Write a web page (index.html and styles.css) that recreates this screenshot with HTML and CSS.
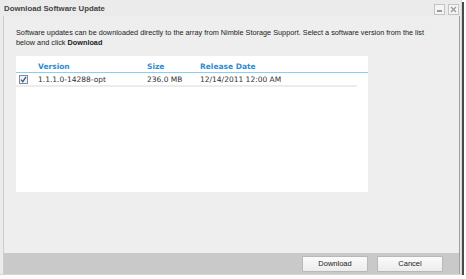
FILE: index.html
```html
<!DOCTYPE html>
<html>
<head>
<meta charset="utf-8">
<link rel="stylesheet" href="styles.css">
</head>
<body>
<div class="window">
  <div class="titlebar">
    <span class="title">Download Software Update</span>
    <div class="tools">
      <span class="tool"><svg width="7" height="7" viewBox="0 0 7 7"><rect x="1" y="4" width="5" height="2" fill="#9a9a9a"/></svg></span>
      <span class="tool"><svg width="7" height="7" viewBox="0 0 7 7"><path d="M1 1L6 6M6 1L1 6" stroke="#9a9a9a" stroke-width="1.3"/></svg></span>
    </div>
  </div>
  <div class="panel">
    <div class="content">
      <p class="desc">Software updates can be downloaded directly to the array from Nimble Storage Support. Select a software version from the list<br>below and click <b>Download</b></p>
      <div class="list">
        <div class="head">
          <span class="c-check"></span>
          <span class="c-ver">Version</span>
          <span class="c-size">Size</span>
          <span class="c-date">Release Date</span>
        </div>
        <div class="row">
          <span class="c-check"><span class="box"><svg width="7" height="7" viewBox="0 0 7 7"><path d="M1 3.6L2.8 5.6L6 0.8" fill="none" stroke="#2a55b0" stroke-width="1.3"/></svg></span></span>
          <span class="c-ver">1.1.1.0-14288-opt</span>
          <span class="c-size">236.0 MB</span>
          <span class="c-date">12/14/2011 12:00 AM</span>
        </div>
      </div>
    </div>
    <div class="footer">
      <button class="btn">Download</button>
      <button class="btn">Cancel</button>
    </div>
  </div>
</div>
</body>
</html>
```

FILE: styles.css
```css
html, body {
  margin: 0;
  padding: 0;
  background: #ffffff;
}
.window {
  width: 461px;
  height: 274px;
  background: #ebebeb;
  box-shadow: 2px 2px 0 #4a4a4a;
  border-right: 1px solid #d6d6d6;
  border-bottom: 1px solid #d6d6d6;
  display: flex;
  flex-direction: column;
  font-family: "Liberation Sans", Arial, sans-serif;
}
.titlebar {
  height: 16px;
  display: flex;
  align-items: center;
  justify-content: space-between;
  padding: 0 2px 0 4px;
}
.title {
  font-size: 7.8px;
  font-weight: bold;
  color: #444;
}
.tools {
  display: flex;
  gap: 3px;
  margin-top: 2px;
}
.tool {
  width: 9px;
  height: 9px;
  border: 1px solid #c4c4c4;
  background: #f4f4f4;
  display: flex;
  align-items: center;
  justify-content: center;
}
.panel {
  flex: 1;
  margin: 0 1px 0 3px;
  border-left: 1px solid #cdcdcd;
  border-right: 1px solid #a0a0a0;
  background: #eeeeee;
  display: flex;
  flex-direction: column;
}
.content {
  flex: 1;
  padding: 12px 0 0 12px;
}
.desc {
  margin: 0;
  font-size: 7.3px;
  line-height: 9.5px;
  color: #222;
  white-space: nowrap;
}
.list {
  margin-top: 9px;
  width: 352px;
  height: 136px;
  background: #ffffff;
  font-family: "DejaVu Sans", Verdana, sans-serif;
  font-size: 7.5px;
}
.head {
  height: 15px;
  display: flex;
  align-items: flex-end;
  padding-bottom: 1px;
  border-bottom: 1px solid #8ccdf0;
  color: #2f8bd0;
  font-weight: bold;
}
.row {
  width: 341px;
  height: 12px;
  display: flex;
  align-items: center;
  border-bottom: 2px solid #ececec;
  color: #333;
}
.c-check {
  width: 22px;
  display: flex;
  padding-left: 3px;
  box-sizing: border-box;
}
.c-ver { width: 109px; }
.c-size { width: 53px; }
.c-date { flex: 1; }
.box {
  width: 7px;
  height: 7px;
  border: 1px solid #8a8a8a;
  background: #f2f2f2;
  display: flex;
  align-items: center;
  justify-content: center;
}
.footer {
  height: 21px;
  background: #c9c9c9;
  display: flex;
  align-items: center;
  justify-content: flex-end;
  gap: 9px;
  padding-right: 16px;
}
.btn {
  width: 66px;
  height: 16px;
  margin: 0;
  padding: 0;
  border: 1px solid #b8b8b8;
  border-radius: 1px;
  background: linear-gradient(#fbfbfb, #ececec);
  font-family: "Liberation Sans", Arial, sans-serif;
  font-size: 7.5px;
  color: #222;
}
```
